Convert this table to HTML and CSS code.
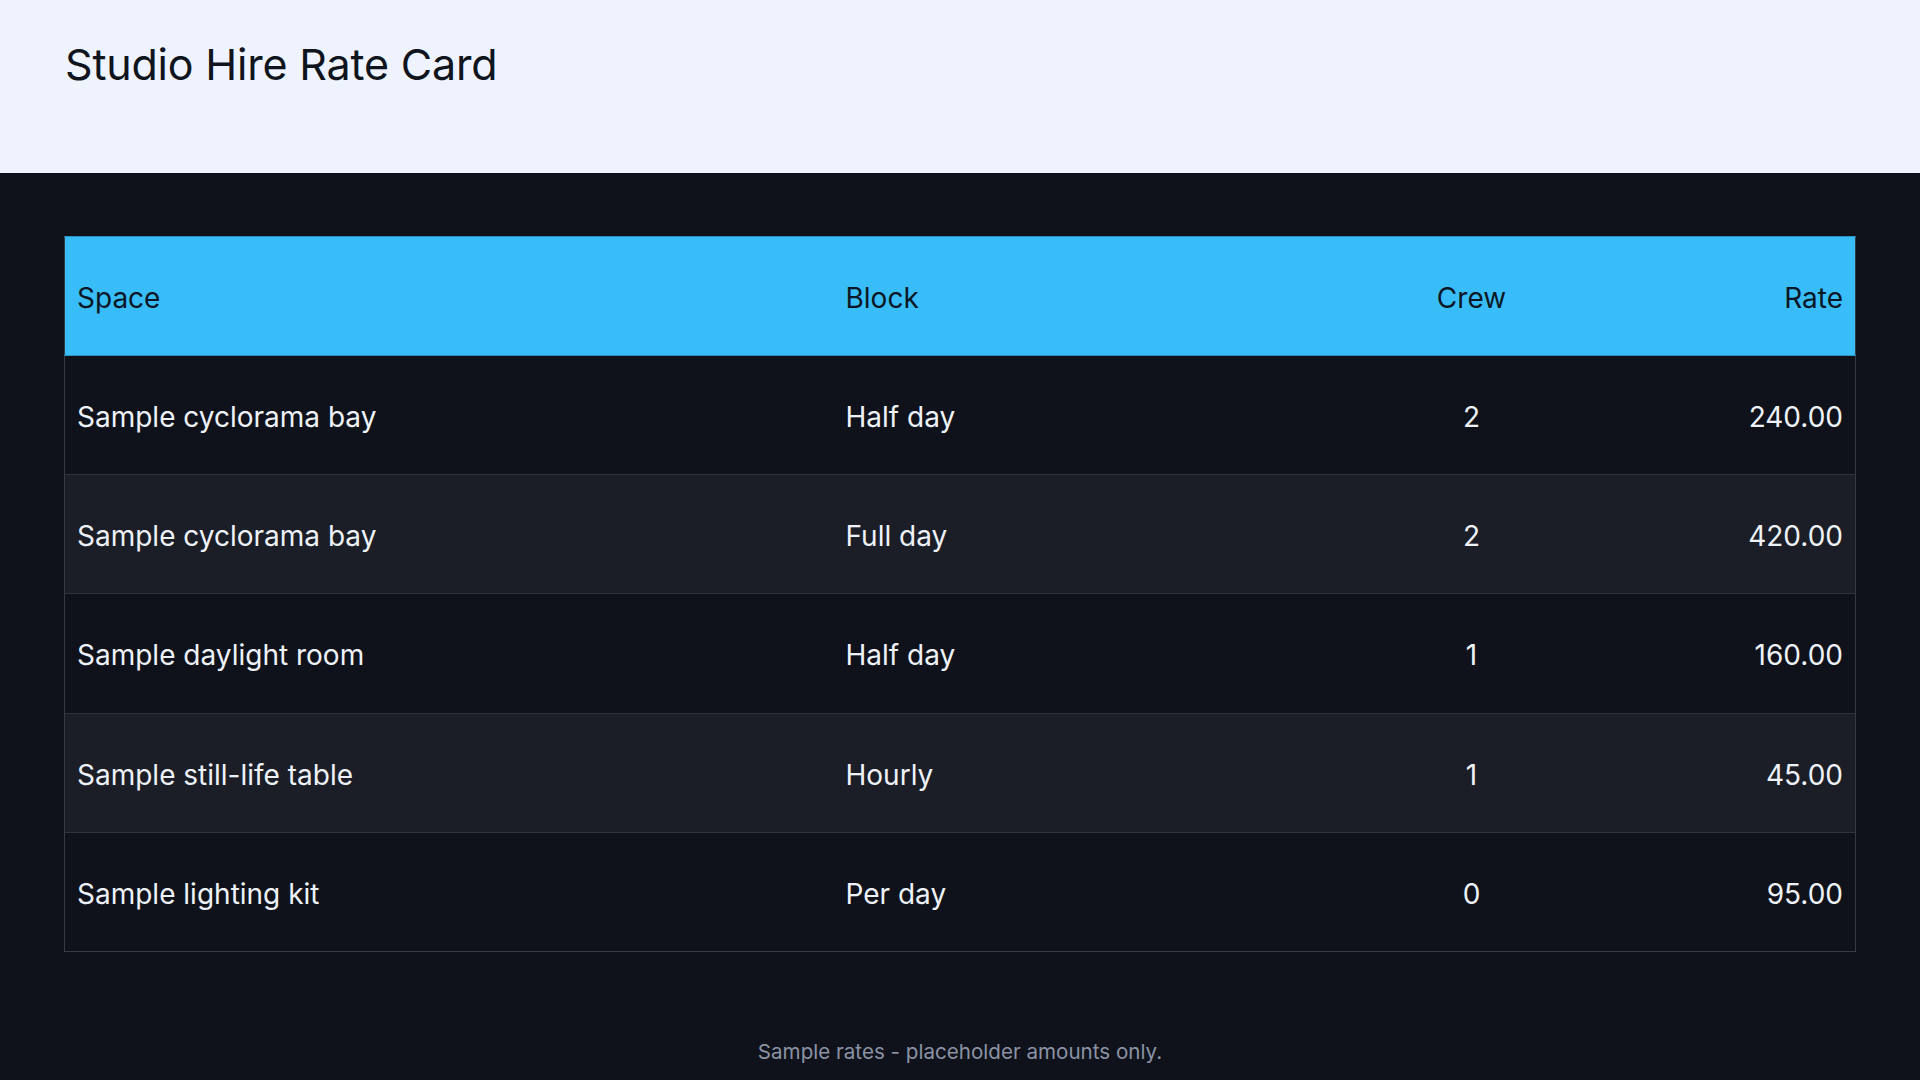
FILE: index.html
```html
<!DOCTYPE html>
<html lang="en">
<head>
<meta charset="utf-8">
<title>Studio Hire Rate Card</title>
<link rel="stylesheet" href="styles.css">
</head>
<body>
<header class="page-head">
  <h1 class="title">Studio Hire Rate Card</h1>
</header>
<main class="content">
  <table class="rates">
    <colgroup>
      <col class="col-space">
      <col class="col-block">
      <col class="col-crew">
      <col class="col-rate">
    </colgroup>
    <thead>
      <tr>
        <th class="left">Space</th>
        <th class="left">Block</th>
        <th class="center">Crew</th>
        <th class="right">Rate</th>
      </tr>
    </thead>
    <tbody>
      <tr>
        <td class="left">Sample cyclorama bay</td>
        <td class="left">Half day</td>
        <td class="center">2</td>
        <td class="right">240.00</td>
      </tr>
      <tr>
        <td class="left">Sample cyclorama bay</td>
        <td class="left">Full day</td>
        <td class="center">2</td>
        <td class="right">420.00</td>
      </tr>
      <tr>
        <td class="left">Sample daylight room</td>
        <td class="left">Half day</td>
        <td class="center">1</td>
        <td class="right">160.00</td>
      </tr>
      <tr>
        <td class="left">Sample still-life table</td>
        <td class="left">Hourly</td>
        <td class="center">1</td>
        <td class="right">45.00</td>
      </tr>
      <tr>
        <td class="left">Sample lighting kit</td>
        <td class="left">Per day</td>
        <td class="center">0</td>
        <td class="right">95.00</td>
      </tr>
    </tbody>
  </table>
  <p class="note">Sample rates - placeholder amounts only.</p>
</main>
</body>
</html>
```
FILE: styles.css
```css
html, body {
  margin: 0;
  padding: 0;
}

body {
  background: #0f121b;
  font-family: Inter, "Liberation Sans", sans-serif;
  color: #eef2f8;
  height: 1080px;
  overflow: hidden;
}

.page-head {
  background: #eef3fd;
  height: 173px;
  box-sizing: border-box;
  padding: 35px 64px 0 65px;
}

.title {
  margin: 0;
  font-size: 43px;
  line-height: 58px;
  font-weight: 400;
  color: #0f141d;
  letter-spacing: -0.2px;
}

.content {
  padding: 63px 64px 0;
}

.rates {
  width: 100%;
  border-collapse: collapse;
  table-layout: fixed;
  border: 1px solid #353a45;
  font-size: 28px;
  line-height: 34px;
}

.col-space { width: 769px; }
.col-block { width: 540px; }
.col-crew { width: 196px; }
.col-rate { width: auto; }

.rates th {
  background: #38bdf8;
  color: #0b1724;
  font-weight: 400;
  padding: 44px 12px 40px;
  border-top: 1px solid #2c8fbd;
  border-bottom: 1px solid #2c8fbd;
}

.rates td {
  padding: 44px 12px 40.2px;
  border-top: 1px solid #2f333d;
  color: #eef2f8;
}

.rates tbody tr:nth-child(even) td {
  background: #1b1e27;
}

.rates tbody tr:nth-child(odd) td {
  background: #0f121b;
}

.left { text-align: left; }
.center { text-align: center; }
.right { text-align: right; }

.note {
  margin: 88px 0 0;
  text-align: center;
  font-size: 20.6px;
  line-height: 24px;
  color: #8b93a5;
}
```
